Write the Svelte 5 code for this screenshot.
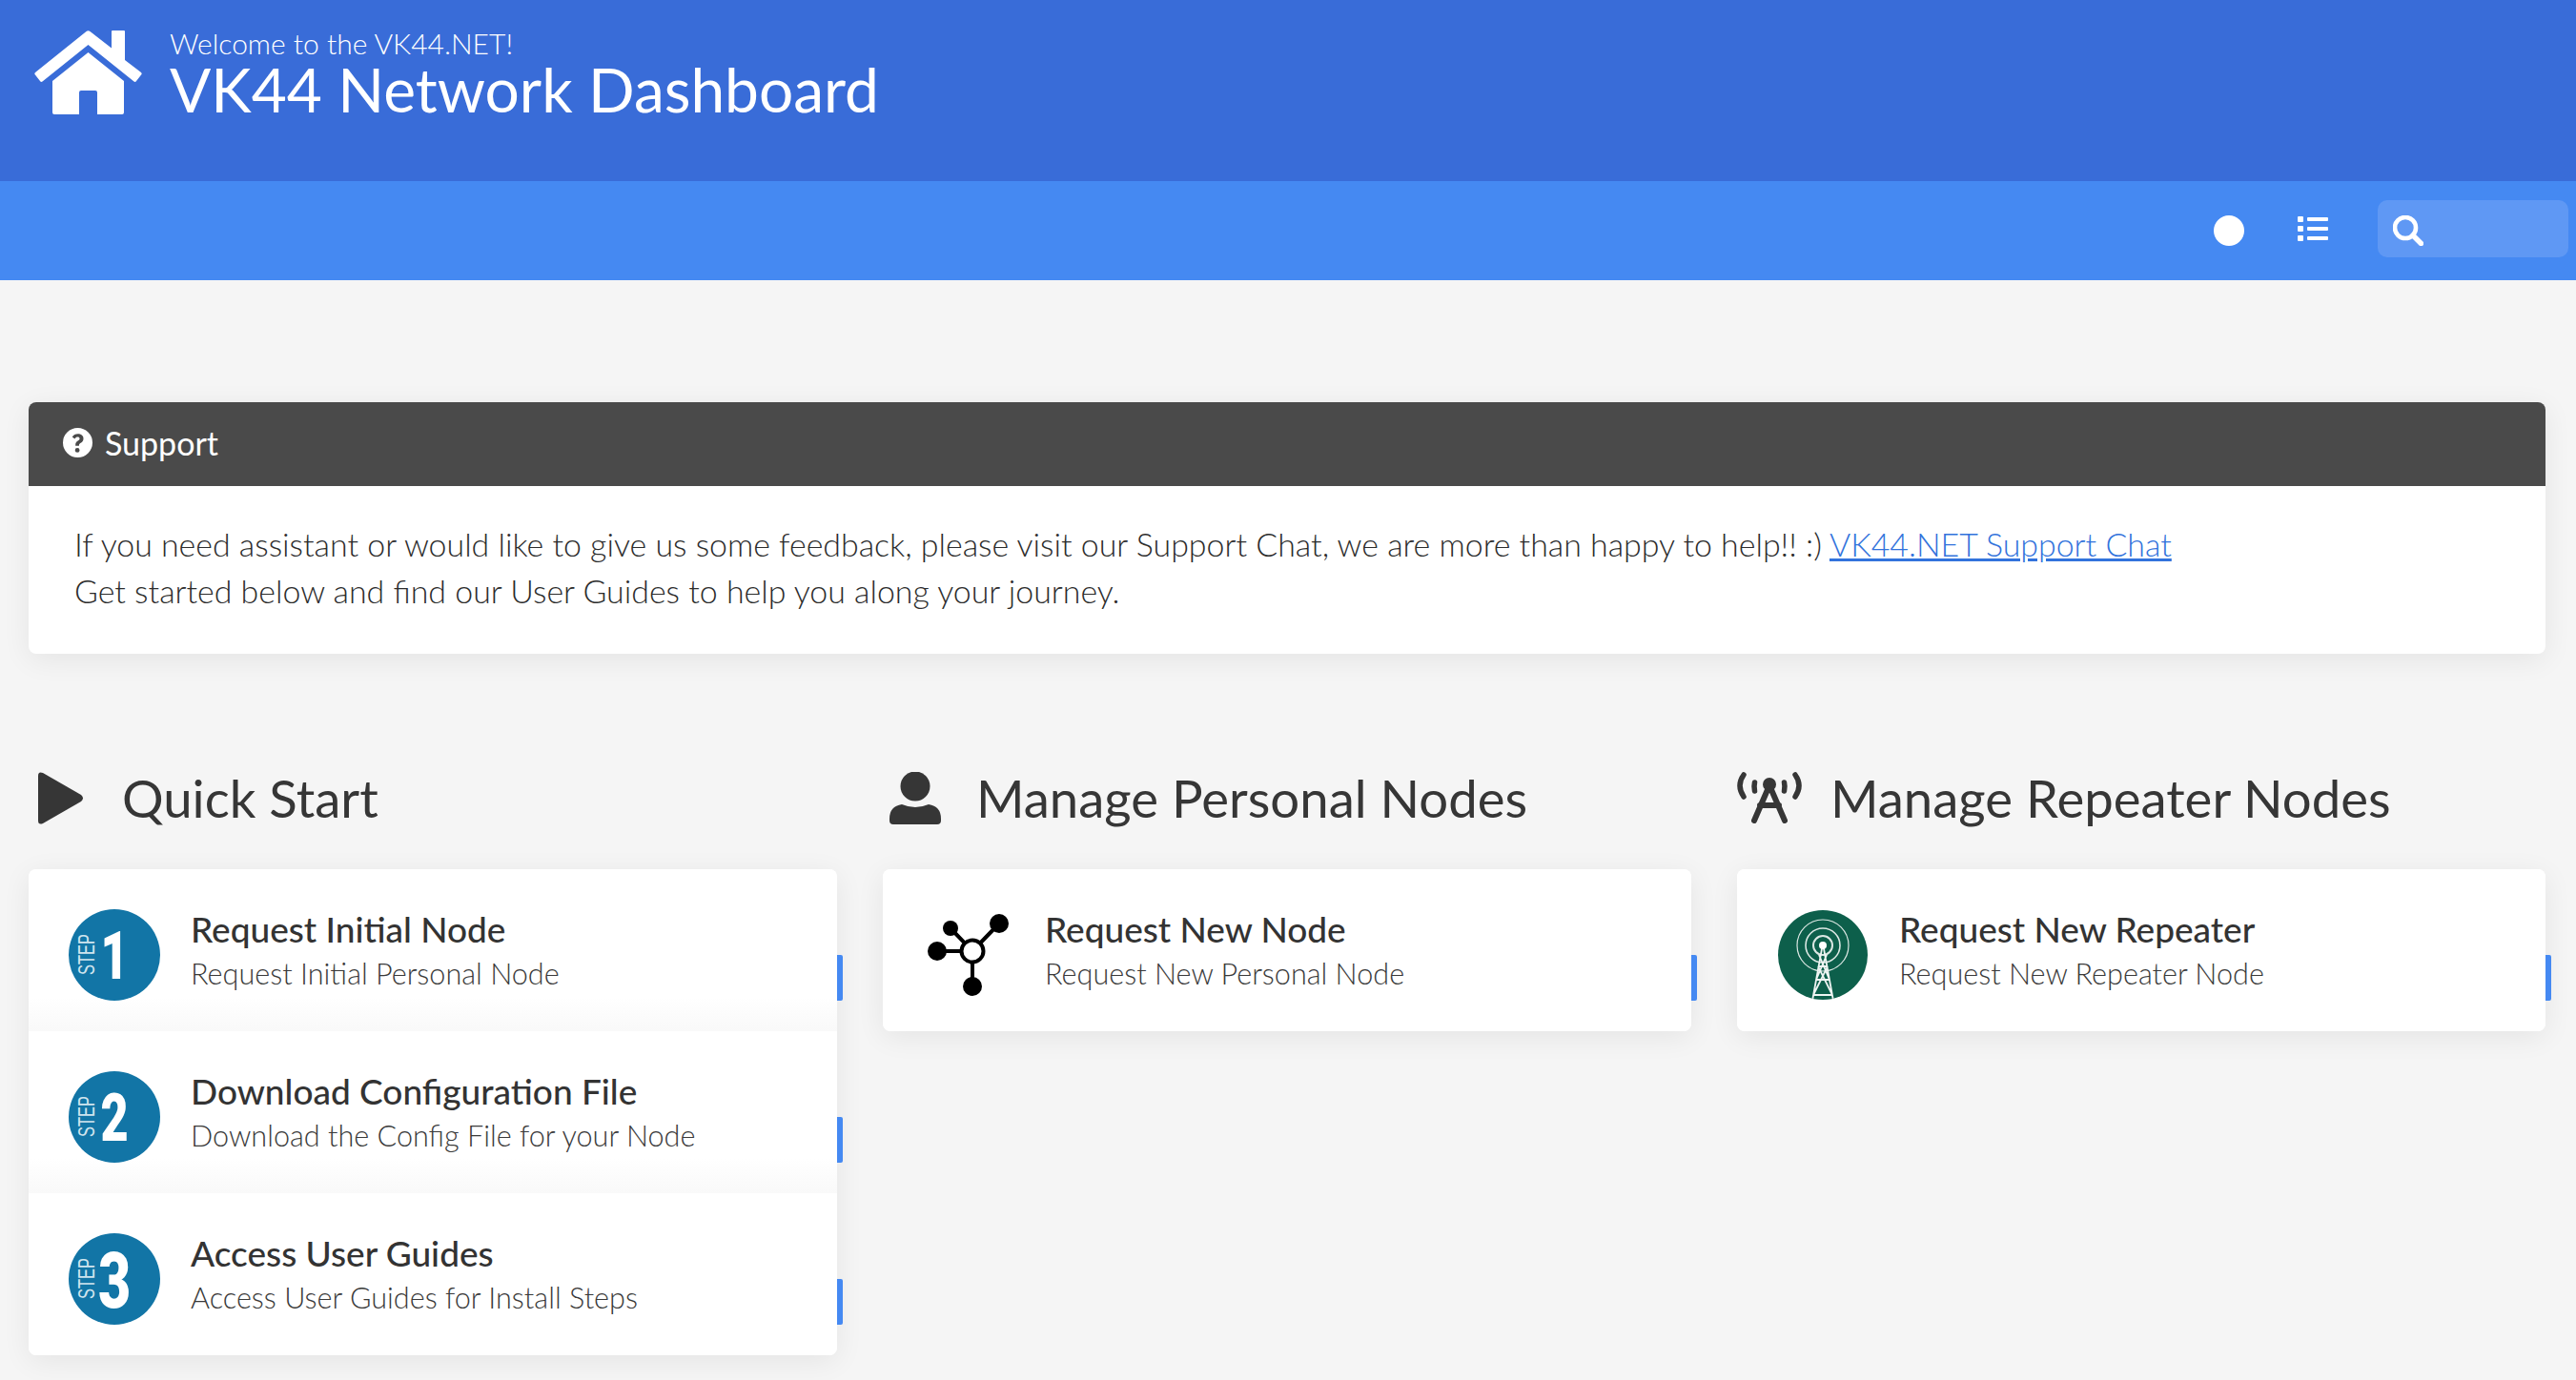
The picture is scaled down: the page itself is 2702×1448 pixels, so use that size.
<script>
  const steps = [
    { n: '1', title: 'Request Initial Node', sub: 'Request Initial Personal Node', big: false },
    { n: '2', title: 'Download Configuration File', sub: 'Download the Config File for your Node', big: false },
    { n: '3', title: 'Access User Guides', sub: 'Access User Guides for Install Steps', big: true }
  ];
</script>

<header class="top">
  <svg class="house" viewBox="0 0 113 88" width="113" height="88" aria-hidden="true">
    <path fill="#fff" d="M54.500 1 Q56.500 -.5 58.500 1 L81 18.500 L81 1 Q81 0 82 0 L94 0 Q95 0 95 1 L95 31 L112 44 Q113 45 112.500 46 L107 53 Q106 54.500 104.500 53.500 L56.500 15 L8.500 53.500 Q7 54.500 6 53 L.5 46 Q0 45 1 44 Z"/>
    <path fill="#fff" d="M56.500 23 L19 53 L19 86 Q19 88 21 88 L47 88 L47 65 Q47 63 49 63 L64 63 Q66 63 66 65 L66 88 L92 88 Q94 88 94 86 L94 53 Z"/>
  </svg>
  <div class="brand">
    <div class="welcome">Welcome to the VK44.NET!</div>
    <div class="name">VK44 Network Dashboard</div>
  </div>
</header>

<nav class="bar">
  <span class="dot"></span>
  <svg class="list" viewBox="0 0 32 26" width="32" height="26" aria-hidden="true">
    <g fill="#fff">
      <rect x="0" y="0" width="6" height="6" rx="1"/><rect x="10" y="1" width="22" height="4" rx="1"/>
      <rect x="0" y="10" width="6" height="6" rx="1"/><rect x="10" y="11" width="22" height="4" rx="1"/>
      <rect x="0" y="20" width="6" height="6" rx="1"/><rect x="10" y="21" width="22" height="4" rx="1"/>
    </g>
  </svg>
  <div class="search">
    <svg viewBox="0 0 32 32" width="32" height="32" aria-hidden="true">
      <circle cx="13" cy="13" r="11" fill="none" stroke="#fff" stroke-width="4.600"/>
      <path d="M21 21 L29.500 29.500" stroke="#fff" stroke-width="5.500" stroke-linecap="round"/>
    </svg>
  </div>
</nav>

<main class="page">
  <section class="card support">
    <div class="support-head">
      <svg viewBox="0 0 32 32" width="31" height="31" aria-hidden="true">
        <path fill="#fff" fill-rule="evenodd" d="M16 0a16 16 0 1 0 0 32a16 16 0 0 0 0-32Zm-2.400 19.400v-1.200c0-2.200 1-3.200 2.600-4.300c1.200-.8 1.900-1.300 1.900-2.300c0-1-.9-1.700-2.100-1.700c-1.300 0-2.200.7-3.200 1.900l-2.700-2c1.500-2.200 3.400-3.300 6.200-3.300c3.200 0 5.900 1.900 5.900 5c0 2.700-1.500 3.800-3.300 5c-1 .7-1.400 1.200-1.400 1.900v1Zm2 2.300a2.500 2.500 0 1 1 0 5a2.500 2.500 0 0 1 0-5Z"/>
      </svg>
      <span>Support</span>
    </div>
    <div class="support-body">
      If you need assistant or would like to give us some feedback, please visit our Support Chat, we are more than happy to help!! :) <a href="#chat">VK44.NET Support Chat</a><br />
      Get started below and find our User Guides to help you along your journey.
    </div>
  </section>

  <div class="cols">
    <section>
      <h2>
        <span class="h-icon">
          <svg viewBox="0 0 48 55" width="48" height="55" aria-hidden="true"><path fill="#363636" d="M0 4 Q0 -1 5 1 L45 24 Q49 27.500 45 31 L5 54 Q0 56 0 51 Z"/></svg>
        </span>
        <span>Quick Start</span>
      </h2>
      <div class="card list-card">
        {#each steps as s}
          <div class="item">
            <svg class="ic" viewBox="0 0 96 96" width="96" height="96" aria-hidden="true">
              <circle cx="48" cy="48" r="48" fill="#1275a6"/>
              <text class="step" transform="translate(27 69) rotate(-90)" textLength="43" lengthAdjust="spacingAndGlyphs">STEP</text>
              {#if s.big}
                <text class="num big" x="0" y="0" transform="translate(48 78) scale(.72 1)" text-anchor="middle">{s.n}</text>
              {:else}
                <text class="num" x="0" y="0" transform="translate(48 73) scale(.72 1)" text-anchor="middle">{s.n}</text>
              {/if}
            </svg>
            <div class="txt">
              <div class="t">{s.title}</div>
              <div class="s">{s.sub}</div>
            </div>
            <span class="tab"></span>
          </div>
        {/each}
      </div>
    </section>

    <section>
      <h2>
        <span class="h-icon">
          <svg viewBox="0 0 54 55" width="54" height="55" aria-hidden="true">
            <circle cx="27" cy="15" r="15.500" fill="#363636"/>
            <path fill="#363636" d="M13 34 Q27 40 41 34 Q54 36 54 49 L54 51 Q54 55 50 55 L4 55 Q0 55 0 51 L0 49 Q0 36 13 34 Z"/>
          </svg>
        </span>
        <span>Manage Personal Nodes</span>
      </h2>
      <div class="card list-card">
        <div class="item">
          <svg class="ic" viewBox="0 0 96 96" width="96" height="96" aria-hidden="true">
            <g stroke="#000" stroke-width="4" fill="none">
              <path d="M52 44 L80 15 M52 44 L29 20 M52 44 L15 44 M52 44 L52 81"/>
              <circle cx="52" cy="44" r="11.500" fill="#fff"/>
            </g>
            <g fill="#000">
              <circle cx="80" cy="15" r="10"/><circle cx="29" cy="20" r="8"/>
              <circle cx="15" cy="44" r="10"/><circle cx="52" cy="81" r="10"/>
            </g>
          </svg>
          <div class="txt">
            <div class="t">Request New Node</div>
            <div class="s">Request New Personal Node</div>
          </div>
          <span class="tab"></span>
        </div>
      </div>
    </section>

    <section>
      <h2>
        <span class="h-icon">
          <svg viewBox="0 0 68 55" width="68" height="55" aria-hidden="true">
            <g fill="none" stroke="#363636" stroke-linecap="round">
              <path stroke-width="5.500" d="M7 3 Q-1 14 7 26 M61 3 Q69 14 61 26"/>
              <path stroke-width="5.500" d="M18.500 11 Q17.500 15 18.500 20 M49.500 11 Q50.500 15 49.500 20"/>
              <path stroke-width="6" d="M34 14 L18 51 M34 14 L50 51 M24 35 L44 35"/>
            </g>
            <circle cx="34" cy="13" r="7" fill="#363636"/>
          </svg>
        </span>
        <span>Manage Repeater Nodes</span>
      </h2>
      <div class="card list-card">
        <div class="item">
          <svg class="ic" viewBox="0 0 96 96" width="96" height="96" aria-hidden="true">
            <defs><clipPath id="tw"><circle cx="48" cy="48" r="47"/></clipPath></defs>
            <circle cx="48" cy="48" r="47" fill="#0d5f4b"/>
            <g fill="none" stroke="#dbe7e3" clip-path="url(#tw)">
              <circle cx="48" cy="38" r="27" stroke-width="1.200"/>
              <circle cx="48" cy="38" r="18" stroke-width="1.600"/>
              <circle cx="48" cy="38" r="10" stroke-width="2"/>
              <path stroke-width="1.800" stroke="#eef4f2" d="M48 36 L37 96 M48 36 L59 96 M43 60 L53 60 M41 74 L55 74 M38 90 L58 90 M44 48 L55 74 M52 48 L41 74 M43 60 L58 90 M53 60 L38 90"/>
            </g>
            <circle cx="48" cy="38" r="4" fill="#fff"/>
          </svg>
          <div class="txt">
            <div class="t">Request New Repeater</div>
            <div class="s">Request New Repeater Node</div>
          </div>
          <span class="tab"></span>
        </div>
      </div>
    </section>
  </div>
</main>

<style>
  :global(body) {
    margin: 0;
    background: #f5f5f5;
    color: #363636;
    font-family: Lato, "Open Sans", sans-serif;
  }
  .top {
    height: 190px;
    box-sizing: border-box;
    background: #396cd8;
    color: #fff;
    display: flex;
    align-items: flex-start;
    padding: 32px 0 0 36px;
    gap: 29px;
  }
  .house { flex: none; }
  .brand { margin-top: -5px; }
  .welcome { font-size: 30px; font-weight: 300; line-height: 36px; }
  .name { font-size: 64px; font-weight: 400; line-height: 62px; }
  .bar {
    height: 104px;
    box-sizing: border-box;
    background: #4589f2;
    display: flex;
    align-items: center;
    justify-content: flex-end;
    padding-right: 8px;
  }
  .dot { width: 32px; height: 32px; border-radius: 50%; background: #fff; margin-right: 56px; }
  .list { margin: 0 52px 4px 0; }
  .search {
    width: 200px;
    height: 60px;
    box-sizing: border-box;
    border-radius: 10px;
    background: #5f98f4;
    padding: 16px;
    margin-bottom: 4px;
  }
  .search svg { display: block; }
  .page { padding: 128px 32px 26px 30px; }
  .card {
    background: #fff;
    border-radius: 8px;
    box-shadow: 0 6px 30px rgba(0, 0, 0, .07);
  }
  .support { overflow: hidden; }
  .support-head {
    height: 88px;
    box-sizing: border-box;
    background: #4a4a4a;
    color: #fff;
    display: flex;
    align-items: center;
    padding: 0 0 4px 36px;
    gap: 13px;
    font-size: 34px;
    font-weight: 400;
  }
  .support-body {
    height: 176px;
    box-sizing: border-box;
    padding: 37px 48px 0;
    font-size: 33.900px;
    line-height: 48.500px;
    font-weight: 300;
    color: #2c2c2c;
  }
  a { color: #3273dc; }
  .cols {
    display: grid;
    grid-template-columns: repeat(3, 1fr);
    gap: 48px;
    margin-top: 116px;
  }
  h2 {
    margin: 0 0 40px;
    height: 70px;
    display: flex;
    align-items: center;
    gap: 30px;
    font-size: 54.500px;
    font-weight: 400;
    color: #363636;
    white-space: nowrap;
  }
  .h-icon { width: 68px; flex: none; display: flex; justify-content: center; }
  .list-card { position: relative; }
  .item {
    height: 170px;
    box-sizing: border-box;
    display: flex;
    align-items: flex-start;
    gap: 32px;
    padding: 42px 42px 0;
    position: relative;
    background: linear-gradient(to top, #f9f9f9, #fff 36px);
  }
  .item:first-child { border-radius: 8px 8px 0 0; }
  .item:last-child { background: #fff; border-radius: 0 0 8px 8px; }
  .item:only-child { border-radius: 8px; }
  .ic { flex: none; overflow: visible; }
  .step { font: 400 23px "Liberation Sans", sans-serif; fill: #cfe4ee; }
  .num { font: 900 70px Roboto, sans-serif; fill: #fff; }
  .num.big { font-size: 82px; }
  .txt { margin-top: -3px; }
  .t { font-size: 37px; line-height: 48px; font-weight: 500; color: #333; }
  .s { font-size: 30.600px; line-height: 45px; font-weight: 300; color: #3a3a3a; }
  .tab {
    position: absolute;
    right: -6px;
    top: 90px;
    width: 6px;
    height: 48px;
    border-radius: 0 2px 2px 0;
    background: #4589f2;
  }
</style>
